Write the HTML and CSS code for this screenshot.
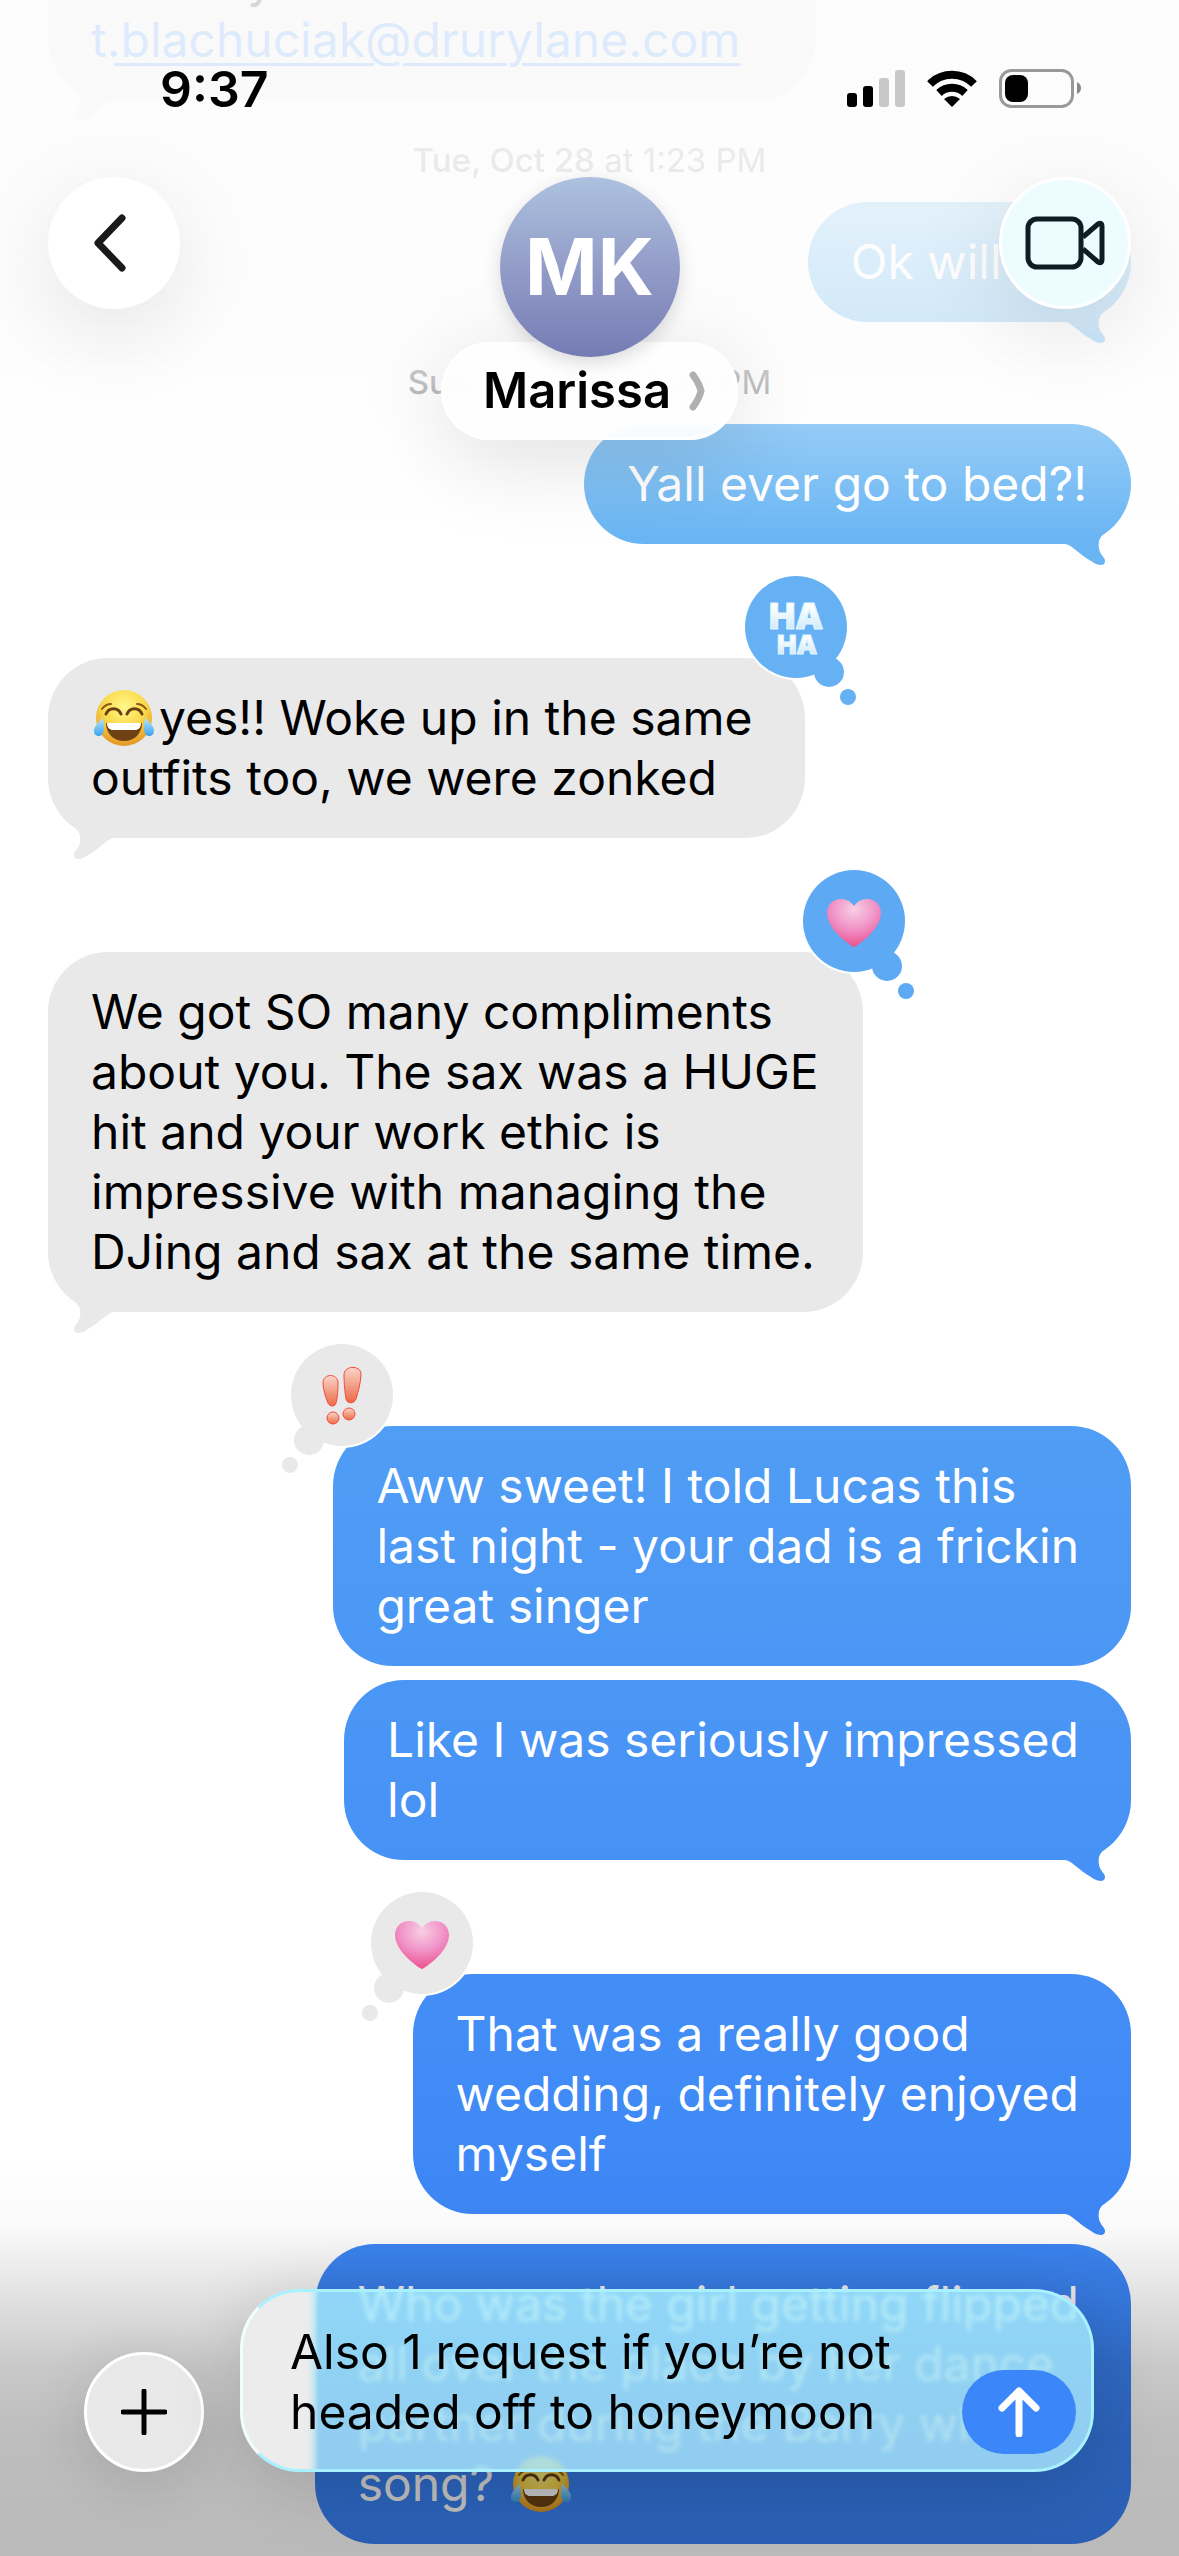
FILE: index.html
```html
<!DOCTYPE html>
<html lang="en">
<head>
<meta charset="utf-8">
<meta name="viewport" content="width=device-width, initial-scale=1">
<title>Marissa</title>
<link rel="stylesheet" href="styles.css">
</head>
<body>
<svg class="defs" aria-hidden="true">
  <defs>
    <radialGradient id="face" cx="50%" cy="30%" r="75%"><stop offset="0" stop-color="#fff88a"/><stop offset=".5" stop-color="#fbd94c"/><stop offset="1" stop-color="#e08a1e"/></radialGradient>
    <linearGradient id="tear" x1="0" y1="0" x2="0" y2="1"><stop offset="0" stop-color="#b5e8ff"/><stop offset="1" stop-color="#3ba3ee"/></linearGradient>
    <radialGradient id="heart" cx="50%" cy="22%" r="80%"><stop offset="0" stop-color="#f8cfe2"/><stop offset=".5" stop-color="#f094c8"/><stop offset="1" stop-color="#ec4d8c"/></radialGradient>
    <linearGradient id="bang" x1="0" y1="0" x2="0" y2="1"><stop offset="0" stop-color="#f9d5c8"/><stop offset="1" stop-color="#ed6a45"/></linearGradient>
    <linearGradient id="puff" x1="0" y1="0" x2="0" y2="1"><stop offset=".3" stop-color="#fbffff"/><stop offset="1" stop-color="#bfe2fb"/></linearGradient>
    <symbol id="joy" viewBox="0 0 62 58">
      <circle cx="31" cy="29" r="28" fill="url(#face)"/>
      <path d="M13 25c3-7 12-7 15 0M34 25c3-7 12-7 15 0" fill="none" stroke="#6b3f12" stroke-width="3" stroke-linecap="round"/>
      <path d="M9 20c3-4 6-5 9-5M53 20c-3-4-6-5-9-5" fill="none" stroke="#8a5a14" stroke-width="2" stroke-linecap="round"/>
      <path d="M13 34h36c0 11-8 18-18 18s-18-7-18-18z" fill="#6e4212"/>
      <path d="M14 34h34c0 5-3 7-6 7H20c-3 0-6-2-6-7z" fill="#fff"/>
      <path d="M10 29c-6 5-9 9-9 13 0 3 2 5 5 5 5 0 6-7 4-18zM52 29c6 5 9 9 9 13 0 3-2 5-5 5-5 0-6-7-4-18z" fill="url(#tear)"/>
    </symbol>
    <symbol id="pink-heart" viewBox="0 0 54 48">
      <path d="M27 48C24 47 0 31 0 14 0 6 6 0 14 0c6 0 10 3 13 7 3-4 7-7 13-7 8 0 14 6 14 14 0 17-24 33-27 34z" fill="url(#heart)"/>
    </symbol>
  </defs>
</svg>

<main class="thread">
  <div class="bubble received tail"><span class="wrapped-word">y</span><br><a href="mailto:t.blachuciak@drurylane.com">t.blachuciak@drurylane.com</a></div>
  <time class="stamp"><b>Tue, Oct 28</b> at 1:23 PM</time>
  <div class="bubble sent tail">Ok will do!</div>
  <time class="stamp"><b>Sun, Nov 2</b> at 12:23 PM</time>
  <div class="bubble sent tail">Yall ever go to bed?!</div>

  <div class="bubble received tail reacted wrapped"><svg class="emoji" role="img" aria-label="Tears of joy"><use href="#joy"/></svg>yes!! Woke up in the same<br>outfits too, we were zonked
    <svg class="reaction" viewBox="0 0 114 132" role="img" aria-label="Haha reaction">
      <circle class="ring" cx="51" cy="51" r="53"/>
      <g fill="#66b1f4"><circle cx="51" cy="51" r="51"/><circle cx="84" cy="96" r="15"/><circle cx="103" cy="121" r="8"/></g>
      <g class="haha"><text x="51" y="53" font-size="35">HA</text><text x="52" y="78" font-size="26">HA</text></g>
    </svg>
  </div>

  <div class="bubble received tail reacted">We got SO many compliments<br>about you. The sax was a HUGE<br>hit and your work ethic is<br>impressive with managing the<br>DJing and sax at the same time.
    <svg class="reaction" viewBox="0 0 114 132" role="img" aria-label="Heart reaction">
      <circle class="ring" cx="51" cy="51" r="53"/>
      <g fill="#5da9f4"><circle cx="51" cy="51" r="51"/><circle cx="84" cy="96" r="15"/><circle cx="103" cy="121" r="8"/></g>
      <use href="#pink-heart" x="24" y="29" width="54" height="48"/>
    </svg>
  </div>

  <div class="bubble sent reacted wrapped">Aww sweet! I told Lucas this<br>last night - your dad is a frickin<br>great singer
    <svg class="reaction" viewBox="0 0 114 132" role="img" aria-label="Emphasis reaction">
      <circle class="ring" cx="63" cy="51" r="53"/>
      <g fill="#e9e9e9"><circle cx="63" cy="51" r="51"/><circle cx="30" cy="96" r="15"/><circle cx="11" cy="121" r="8"/></g>
      <g fill="url(#bang)" stroke="#ee4a3c" stroke-width="1">
        <path d="M44 39c0-10 15-10 15 0 0 9-1 17-2 20-1 4-6 4-8 0-2-5-5-13-5-20z"/>
        <path d="M65 31c0-10 17-10 17-1 0 8-3 18-5 25-2 5-9 5-10 0-1-6-2-16-2-24z"/>
        <circle cx="54" cy="74" r="6"/><circle cx="70" cy="70" r="6"/>
      </g>
    </svg>
  </div>
  <div class="bubble sent tail grouped wrapped">Like I was seriously impressed<br>lol</div>

  <div class="bubble sent tail reacted wrapped">That was a really good<br>wedding, definitely enjoyed<br>myself
    <svg class="reaction" viewBox="0 0 114 132" role="img" aria-label="Heart reaction">
      <circle class="ring" cx="63" cy="51" r="53"/>
      <g fill="#e9e9e9"><circle cx="63" cy="51" r="51"/><circle cx="30" cy="96" r="15"/><circle cx="11" cy="121" r="8"/></g>
      <use href="#pink-heart" x="36" y="29" width="54" height="48"/>
    </svg>
  </div>

  <div class="bubble sent last wrapped">Who was the girl getting flipped<br>all over the place by her dance<br>partner during the Barry white<br>song? <svg class="emoji" role="img" aria-label="Tears of joy"><use href="#joy"/></svg></div>
</main>

<header class="top">
  <div class="status">
    <span class="clock">9:37</span>
    <svg width="58" height="38" viewBox="0 0 58 38" aria-label="Signal"><rect y="23" width="10" height="14" rx="3"/><rect x="16" y="16" width="10" height="21" rx="3"/><g fill="#c8c8c8"><rect x="32" y="8" width="10" height="29" rx="3"/><rect x="48" width="10" height="37" rx="3"/></g></svg>
    <svg width="50" height="38" viewBox="0 0 50 38" aria-label="Wi-Fi"><g fill="none" stroke="#000" stroke-width="8"><path d="M3 14a31 31 0 0 1 44 0"/><path d="M12 23a19 19 0 0 1 26 0"/></g><path d="M25 37l-8-8q8-6 16 0z"/></svg>
    <svg width="82" height="40" viewBox="0 0 82 40" aria-label="Battery"><rect x="1.500" y="1.500" width="72" height="36" rx="11" fill="none" stroke="#999" stroke-width="3"/><rect x="6" y="6" width="23" height="27" rx="8"/><path d="M78 13q4 2 4 6t-4 6z" fill="#888"/></svg>
  </div>
  <nav class="nav">
    <button class="round" aria-label="Back"><svg width="48" height="64" viewBox="0 0 48 64"><path d="M32 7L8 32l24 25" fill="none" stroke="#1a1a1a" stroke-width="7" stroke-linecap="round" stroke-linejoin="round"/></svg></button>
    <div class="contact">
      <div class="avatar">MK</div>
      <button class="name">Marissa<svg width="16" height="40" viewBox="0 0 16 40"><path d="M4 4q6 8 8 16-2 8-8 16" fill="none" stroke="#b0b0b0" stroke-width="7" stroke-linecap="round"/></svg></button>
    </div>
    <button class="round video" aria-label="Video call"><svg width="80" height="54" viewBox="0 0 80 54"><g fill="none" stroke="#0f1c24" stroke-width="5" stroke-linejoin="round"><rect x="3" y="3" width="53" height="48" rx="9"/><path d="M58 21L73 8q4-2 4 2v34q0 4-4 2L58 33"/></g></svg></button>
  </nav>
</header>

<footer class="composer">
  <button class="plus" aria-label="Add"><svg width="46" height="46" viewBox="0 0 46 46"><path d="M23 2v42M2 23h42" stroke="#000" stroke-width="5" stroke-linecap="round"/></svg></button>
  <form class="field">
    <textarea aria-label="Message" rows="2">Also 1 request if you’re not
headed off to honeymoon</textarea>
    <button class="send" type="button" aria-label="Send"><svg width="42" height="50" viewBox="0 0 42 50"><path d="M21 47V4M4 21L21 4l17 17" fill="none" stroke="#fff" stroke-width="7" stroke-linecap="round" stroke-linejoin="round"/></svg></button>
  </form>
</footer>
</body>
</html>
```

FILE: styles.css
```css
* { box-sizing: border-box; }

body {
  margin: 0;
  background: #fff;
  color: #000;
  font-family: Inter, "Liberation Sans", sans-serif;
  font-size: 48px;
  line-height: 60px;
  overflow: hidden;
}

button, textarea {
  margin: 0;
  padding: 0;
  border: 0;
  background: none;
  color: inherit;
  font: inherit;
}

.defs { position: absolute; width: 0; height: 0; }

/* Conversation */
.thread {
  display: flex;
  flex-direction: column;
  justify-content: flex-end;
  height: 100vh;
  padding: 0 48px 12px;
  overflow: hidden;
}

.bubble {
  position: relative;
  flex: none;
  padding: 30px 44px 30px 43px;
  border-radius: 60px;
  white-space: nowrap;
}

.wrapped { padding-right: 52px; }

.sent,
.sent::after {
  background: linear-gradient(#7cc6f4 0, #69b5f4 22%, #5da9f5 36%, #509df5 56%, #4792f5 72%, #3e88f7 86%, #3a82f7 100%) fixed;
}

.sent { align-self: flex-end; color: #fff; }

.received,
.received::after { background: #e9e9e9; }

.received { align-self: flex-start; }

.received a { color: #2f86f6; text-decoration-thickness: 3px; text-underline-offset: 6px; }

.wrapped-word { padding: 0 498px 0 156px; }

.tail::after {
  content: "";
  position: absolute;
  bottom: -21px;
  width: 66px;
  height: 60px;
}

.sent.tail::after {
  right: 0;
  clip-path: path("M0 39C6 39 12 48 26 56C30 59 34 60 36 60C40 60 41 56 39 53C34 47 33 43 34 36C36 28 48 24 55 12L60 0L0 0Z");
}

.received.tail::after {
  left: 0;
  clip-path: path("M66 39C60 39 54 48 40 56C36 59 32 60 30 60C26 60 25 56 27 53C32 47 33 43 32 36C30 28 18 24 11 12L6 0L66 0Z");
}

.reacted { margin-top: 114px; }
.grouped { margin-top: 14px; }
.last { margin-top: 30px; }

.reaction { position: absolute; top: -82px; width: 114px; height: 132px; overflow: visible; }
.received .reaction { right: -54px; }
.sent .reaction { left: -54px; }
.ring { fill: #fff; }

.haha { fill: url(#puff); stroke: #e6f5ff; stroke-width: 1; stroke-linejoin: round; font-weight: 900; text-anchor: middle; }

.emoji { width: 62px; height: 58px; margin: 0 4px 0 2px; vertical-align: -12px; }

.stamp { flex: none; margin: 40px 0 22px; color: #8a8a8e; font-size: 33px; line-height: 40px; text-align: center; }
.stamp b { font-weight: 500; }

/* Header */
.top {
  position: fixed;
  inset: 0 0 auto;
  height: 560px;
  background: linear-gradient(rgba(252,252,252,.85) 0, rgba(252,252,252,.85) 150px, rgba(252,252,252,.8) 220px, rgba(252,252,252,.7) 320px, rgba(252,252,252,.5) 380px, rgba(253,253,253,.26) 430px, rgba(255,255,255,0) 540px);
}

.status { display: flex; align-items: center; gap: 22px; height: 177px; padding: 0 98px 0 160px; }
.clock { flex: 1; font-size: 50px; font-weight: 600; }

.nav { display: flex; justify-content: space-between; align-items: flex-start; padding: 0 48px; }

.round {
  display: grid;
  place-items: center;
  width: 132px;
  height: 132px;
  border-radius: 50%;
  background: #fff;
  box-shadow: 0 24px 90px rgba(0,0,0,.1);
}

.video { border: 3px solid #fff; background: #edfdff; }

.contact { display: flex; flex-direction: column; align-items: center; }

.avatar {
  z-index: 1;
  width: 180px;
  height: 180px;
  border-radius: 50%;
  background: linear-gradient(#adc2df, #9099c6 55%, #757cb4);
  box-shadow: 0 6px 18px rgba(0,0,0,.14);
  color: #fff;
  font-size: 78px;
  font-weight: 700;
  line-height: 180px;
  text-align: center;
}

.name {
  display: flex;
  align-items: center;
  gap: 18px;
  height: 98px;
  margin-top: -15px;
  padding: 0 30px 0 39px;
  border: 3px solid #fff;
  border-radius: 49px;
  background: rgba(254,254,254,.94);
  backdrop-filter: blur(4px);
  box-shadow: 0 18px 90px rgba(0,0,0,.13);
  font-size: 49px;
  font-weight: 600;
}

/* Composer */
.composer {
  position: fixed;
  inset: auto 0 0;
  display: flex;
  align-items: flex-end;
  gap: 36px;
  height: 400px;
  padding: 0 85px 84px 84px;
  background: linear-gradient(rgba(0,0,0,0) 0, rgba(0,0,0,.02) 70px, rgba(0,0,0,.12) 145px, rgba(0,0,0,.21) 210px, rgba(0,0,0,.26) 280px, rgba(0,0,0,.27) 100%);
}

.plus {
  display: grid;
  place-items: center;
  flex: none;
  width: 120px;
  height: 120px;
  border: 3px solid #fff;
  border-radius: 50%;
  background: #e9e9e9;
  box-shadow: 0 12px 70px rgba(0,0,0,.14);
}

.field {
  display: flex;
  flex: 1;
  align-items: flex-end;
  justify-content: space-between;
  padding: 30px 15px 15px 47px;
  border: 3px solid #a9f1ff;
  border-left-color: #f2fdff;
  border-radius: 60px;
  background:
    linear-gradient(90deg, #ececec 64px, rgba(236,236,236,0) 76px),
    linear-gradient(rgba(167,239,255,.8), rgba(172,232,255,.8));
  backdrop-filter: blur(2px);
  box-shadow: 0 12px 70px rgba(0,0,0,.14);
}

.field textarea { flex: 1; height: 132px; outline: 0; resize: none; overflow: hidden; }

.send {
  display: grid;
  place-items: center;
  width: 114px;
  height: 84px;
  border-radius: 42px;
  background: #3b86f8;
}
```
